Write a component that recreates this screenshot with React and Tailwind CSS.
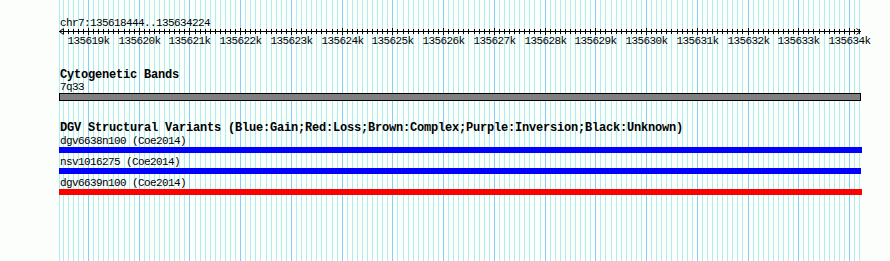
import React from 'react';

// genome window shown in the panel
const VIEW_START = 135618444;
const VIEW_END = 135634224;

// pixel column for a base position (1 kb ~ 50.73 px, 135619k sits at x=88)
const xAt = (bp) => Math.floor(88.5 + (bp - 135619000) * 0.050733);

const TICKS = [];
for (let bp = 135618500; bp <= 135634200; bp += 100) TICKS.push(bp);
const MAJORS = TICKS.filter((bp) => bp % 1000 === 0);

const VARIANTS = [
  { id: 'dgv6638n100', source: 'Coe2014', color: 'bg-[#0000ff]', width: 'w-[803px]' },
  { id: 'nsv1016275', source: 'Coe2014', color: 'bg-[#0000ff]', width: 'w-[802px]' },
  { id: 'dgv6639n100', source: 'Coe2014', color: 'bg-[#ff0000]', width: 'w-[803px]' },
];

function GridLines() {
  return (
    <svg className="absolute inset-0" width="890" height="261" shapeRendering="crispEdges">
      <rect x="59" y="0" width="1" height="261" fill="#afeeee" />
      {TICKS.map((bp) => (
        <rect
          key={bp}
          x={xAt(bp)}
          y="0"
          width="1"
          height="261"
          fill={bp % 1000 === 0 ? '#87cefa' : '#afeeee'}
        />
      ))}
    </svg>
  );
}

function Ruler() {
  return (
    <svg className="block" width="890" height="21">
      <g shapeRendering="crispEdges" fill="#000">
        <rect x="59" y="3" width="802" height="1" />
        {TICKS.map((bp) =>
          bp % 1000 === 0 ? (
            <rect key={bp} x={xAt(bp)} y="0" width="1" height="7" />
          ) : (
            <rect key={bp} x={xAt(bp)} y="1" width="1" height="5" />
          )
        )}
      </g>
      <path d="M63.5 0.5 L59.5 3.5 L63.5 6.5" stroke="#000" strokeWidth="1" fill="none" />
      <path d="M856.5 0.5 L860.5 3.5 L856.5 6.5" stroke="#000" strokeWidth="1" fill="none" />
      {MAJORS.map((bp) => (
        <text
          key={bp}
          x={xAt(bp) + 0.5}
          y="16"
          textAnchor="middle"
          fontFamily="'Liberation Mono', monospace"
          fontSize="11"
          letterSpacing="-0.6"
          fill="#000"
        >
          {Math.round(bp / 1000)}k
        </text>
      ))}
    </svg>
  );
}

export default function App() {
  return (
    <div className="relative w-[890px] h-[261px] overflow-hidden bg-[#fcfefc] font-['Liberation_Mono',monospace] text-black">
      <GridLines />
      <div className="relative flex flex-col pt-[18px]">
        <div className="pl-[60px] h-[10px] text-[11px] leading-[10px] tracking-[-0.6px] whitespace-nowrap">
          chr7:{VIEW_START}..{VIEW_END}
        </div>
        <Ruler />

        <section className="mt-[20px] pl-[59px]">
          <h2 className="pl-px h-[13px] text-[12px] leading-[13px] font-bold tracking-[-0.2px] whitespace-nowrap">
            Cytogenetic Bands
          </h2>
          <div className="pl-px h-[11px] text-[11px] leading-[11px] tracking-[-0.6px]">7q33</div>
          <div className="w-[802px] h-[8px] border border-black bg-[#808080]" />
        </section>

        <section className="mt-[21px] pl-[59px]">
          <h2 className="pl-px h-[13px] text-[12px] leading-[13px] font-bold tracking-[-0.2px] whitespace-nowrap">
            DGV Structural Variants (Blue:Gain;Red:Loss;Brown:Complex;Purple:Inversion;Black:Unknown)
          </h2>
          {VARIANTS.map((v) => (
            <div key={v.id} className="mb-[3px]">
              <div className="pl-px h-[12px] text-[11px] leading-[12px] tracking-[-0.6px] whitespace-nowrap">
                {v.id} ({v.source})
              </div>
              <div className={`${v.width} h-[6px] ${v.color}`} />
            </div>
          ))}
        </section>
      </div>
    </div>
  );
}
